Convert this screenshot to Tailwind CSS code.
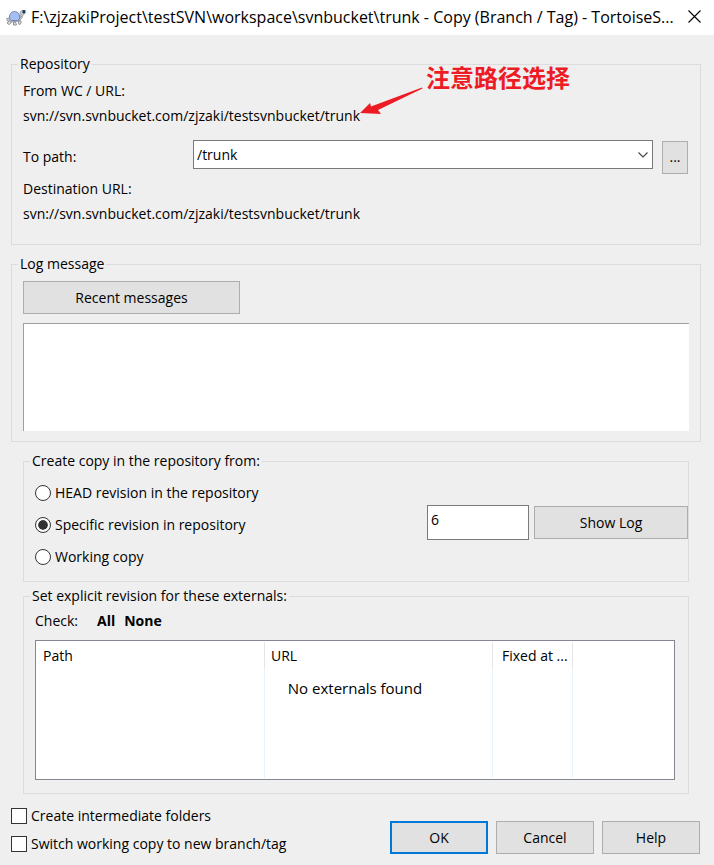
<!DOCTYPE html>
<html lang="en">
<head>
<meta charset="utf-8">
<title>Copy (Branch / Tag) - TortoiseSVN</title>
<meta name="viewport" content="width=device-width, initial-scale=1">
<script src="https://cdn.jsdelivr.net/npm/@tailwindcss/browser@4"></script>
</head>
<body class="min-h-screen bg-[#efefef] font-['Open_Sans','Noto_Sans_CJK_SC',sans-serif] text-[14px] leading-5 text-black">
<header class="flex h-[35px] items-center bg-white pr-[13px] pb-[2px] pl-[6px]">
  <svg class="mr-[5px] h-5 w-5 shrink-0" viewBox="0 0 20 20" aria-hidden="true">
    <path d="M0.500 11.500l1 2.500 3 1 9-1 3-4-1-1.500-2 2.500H3z" fill="#c3c6cc" stroke="#8a8d94" stroke-width=".7"/>
    <path d="M3.500 14l-2.500 2 2 1.500 2.500-2zM7.500 15v3h3l-1-3zM12 14l1 3.500 2-1V14z" fill="#e6e6e8" stroke="#76797f" stroke-width=".8"/>
    <path d="M3.500 12C3 7.500 5 4.500 8.500 4.500S14 7.500 13.500 12l-2 1.500H5.500z" fill="#a3bff5" stroke="#7184ae" stroke-width="1"/>
    <path d="M14 6c0-2 2-3 4-2.500v4l-2 2-2-1z" fill="#c6c9cf" stroke="#85888f" stroke-width=".6"/>
    <rect x="16.500" y="3" width="3" height="3.500" rx="1" fill="#17405c"/>
  </svg>
  <h1 class="min-w-0 flex-1 truncate text-[16px]">F:\zjzakiProject\testSVN\workspace\svnbucket\trunk - Copy (Branch / Tag) - TortoiseS...</h1>
  <button type="button" aria-label="Close" class="ml-2 shrink-0">
    <svg class="h-[13px] w-[13px]" viewBox="0 0 13 13" fill="none" stroke="#000" stroke-width="1.100"><path d="M.5.5l12 12M12.500.5l-12 12"/></svg>
  </button>
</header>

<main class="pt-[19px] pr-[13px] pl-[11px]">
  <fieldset class="relative border border-[#dcdcdc] px-[6px] pb-5">
    <legend class="px-[2px]">Repository</legend>
    <div class="flex flex-col gap-[5px] pt-[7px] pr-[6px] pl-[5px]">
      <p>From WC / URL:</p>
      <p>svn://svn.svnbucket.com/zjzaki/testsvnbucket/trunk</p>
      <div class="mt-[9px] flex h-[34px] items-center">
        <label for="path" class="w-[170px] shrink-0">To path:</label>
        <div class="relative min-w-0 flex-1 self-start">
          <select id="path" class="block h-[29px] w-full appearance-none border border-[#7a7a7a] bg-white px-[3px]"><option>/trunk</option></select>
          <svg class="pointer-events-none absolute top-[12px] right-[5px] h-[6px] w-[10px]" viewBox="0 0 10 6" fill="none" stroke="#444" stroke-width="1.100"><path d="M.5.5L5 5 9.500.5"/></svg>
        </div>
        <button type="button" aria-label="Browse" class="ml-[9px] h-[33px] w-[26px] border border-[#adadad] bg-[#e1e1e1]">...</button>
      </div>
      <p>Destination URL:</p>
      <p>svn://svn.svnbucket.com/zjzaki/testsvnbucket/trunk</p>
    </div>
    <svg class="absolute top-[13px] left-[348px] h-[28px] w-[64px]" viewBox="0 0 64 28" fill="#ed1c24" aria-hidden="true"><path d="M0 26L10 16 11 19.500 62 0.500 62.500 1.500 18 23 21 27z"/></svg>
    <p class="absolute -top-3 left-[414px] text-[24px] leading-[32px] font-bold text-[#ed1c24]">注意路径选择</p>
  </fieldset>

  <fieldset class="mt-[9px] border border-[#dcdcdc] px-[6px] pb-[10px]">
    <legend class="px-[2px]">Log message</legend>
    <div class="flex flex-col items-start gap-[9px] px-[5px] pt-[7px]">
      <button type="button" class="h-[33px] w-[217px] border border-[#adadad] bg-[#e1e1e1]">Recent messages</button>
      <textarea aria-label="Log message" class="block h-[108px] w-full resize-none border-t border-l border-[#a0a0a0] bg-white"></textarea>
    </div>
  </fieldset>

  <div class="px-3">
    <fieldset class="mt-[9px] border border-[#dcdcdc] pb-[14px] pl-[6px]">
      <legend class="px-[2px]">Create copy in the repository from:</legend>
      <div class="flex items-start justify-between pt-[12px] pl-[5px]">
        <div class="flex flex-col gap-3">
          <label class="flex items-center gap-1"><input type="radio" name="rev" class="h-4 w-4 appearance-none rounded-full border border-[#333] bg-white p-[2px]">HEAD revision in the repository</label>
          <label class="flex items-center gap-1"><input type="radio" name="rev" checked class="h-4 w-4 appearance-none rounded-full border border-[#333] bg-[#333] bg-clip-content p-[2px] shadow-[inset_0_0_0_2px_#fff]">Specific revision in repository</label>
          <label class="flex items-center gap-1"><input type="radio" name="rev" class="h-4 w-4 appearance-none rounded-full border border-[#333] bg-white p-[2px]">Working copy</label>
        </div>
        <div class="flex items-center gap-[5px] pt-[22px]">
          <input type="text" value="6" aria-label="Revision" class="h-[35px] w-[102px] border border-[#7a7a7a] bg-white px-[3px] pb-[7px]">
          <button type="button" class="h-[33px] w-[154px] border border-[#adadad] bg-[#e1e1e1]">Show Log</button>
        </div>
      </div>
    </fieldset>

    <fieldset class="mt-1 border border-[#dcdcdc] pr-[13px] pb-[13px] pl-[6px]">
      <legend class="px-[2px]">Set explicit revision for these externals:</legend>
      <div class="pt-[5px] pl-[5px]">
        <div class="flex">
          <span class="w-[62px]">Check:</span>
          <a href="#" class="mr-[9px] font-bold">All</a>
          <a href="#" class="font-bold">None</a>
        </div>
        <div class="relative mt-[9px] border border-[#828790] bg-white py-px">
          <table class="w-full table-fixed border-separate border-spacing-0 text-left">
            <thead>
              <tr class="h-[26px]">
                <th class="w-[229px] border-r border-[#e5e5e5] p-0 pt-[2px] pl-[7px] font-normal">Path</th>
                <th class="w-[228px] border-r border-[#e5e5e5] p-0 pt-[2px] pl-[6px] font-normal">URL</th>
                <th class="w-[80px] border-r border-[#e5e5e5] p-0 pt-[2px] pl-[9px] font-normal whitespace-nowrap">Fixed at ...</th>
                <td></td>
              </tr>
            </thead>
            <tbody>
              <tr class="h-[110px]">
                <td class="border-r border-[#e8f2fc]"></td>
                <td class="border-r border-[#e8f2fc]"></td>
                <td class="border-r border-[#e8f2fc]"></td>
                <td></td>
              </tr>
            </tbody>
          </table>
          <p class="absolute inset-x-0 top-[37px] text-center text-[15px]">No externals found</p>
        </div>
      </div>
    </fieldset>
  </div>

  <footer class="flex items-start justify-between pt-[12px] pr-px">
    <div class="flex flex-col gap-2">
      <label class="flex items-center gap-1"><input type="checkbox" class="h-4 w-4 appearance-none border border-[#333] bg-white">Create intermediate folders</label>
      <label class="flex items-center gap-1"><input type="checkbox" class="h-4 w-4 appearance-none border border-[#333] bg-white">Switch working copy to new branch/tag</label>
    </div>
    <div class="flex gap-2 pt-[15px]">
      <button type="button" class="h-[33px] w-[98px] border-2 border-[#0078d7] bg-[#e1e1e1]">OK</button>
      <button type="button" class="h-[33px] w-[98px] border border-[#adadad] bg-[#e1e1e1]">Cancel</button>
      <button type="button" class="h-[33px] w-[98px] border border-[#adadad] bg-[#e1e1e1]">Help</button>
    </div>
  </footer>
</main>
</body>
</html>
